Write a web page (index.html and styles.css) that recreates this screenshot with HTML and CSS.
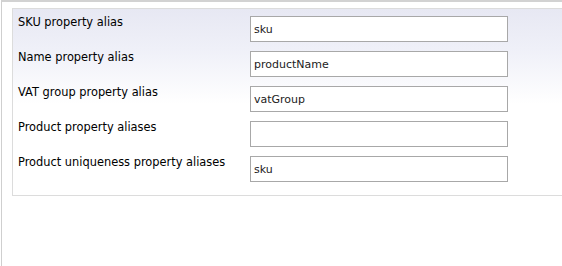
FILE: index.html
```html
<!DOCTYPE html>
<html lang="en">
<head>
    <meta charset="UTF-8">
    <title>Product settings</title>
    <link rel="stylesheet" href="styles.css">
</head>
<body>
    <div class="panel">
        <div class="propertyPane">
            <div class="propertyItem">
                <div class="propertyItemheader">SKU property alias</div>
                <input class="guiInputText" type="text" value="sku">
            </div>
            <div class="propertyItem">
                <div class="propertyItemheader">Name property alias</div>
                <input class="guiInputText" type="text" value="productName">
            </div>
            <div class="propertyItem">
                <div class="propertyItemheader">VAT group property alias</div>
                <input class="guiInputText" type="text" value="vatGroup">
            </div>
            <div class="propertyItem">
                <div class="propertyItemheader">Product property aliases</div>
                <input class="guiInputText" type="text" value="">
            </div>
            <div class="propertyItem">
                <div class="propertyItemheader">Product uniqueness property aliases</div>
                <input class="guiInputText" type="text" value="sku">
            </div>
        </div>
    </div>
</body>
</html>
```

FILE: styles.css
```css
body {
    margin: 0;
    overflow: hidden;
    background: #fff;
    font-family: "DejaVu Sans", sans-serif;
}

.panel {
    height: 264px;
    margin-left: 1px;
    padding: 6px 0 0 10px;
    border-top: 2px solid #d2d2d2;
    border-left: 1px solid #cfcfcf;
}

.propertyPane {
    padding: 7px 0 13px 5px;
    border: 1px solid #dcdcdc;
    border-right: none;
    background: linear-gradient(#e7e8f3, #eff0f8 40px, #fff 95px);
}

.propertyItem {
    display: flex;
    align-items: flex-start;
    height: 35px;
}

.propertyItem:last-child {
    height: 26px;
}

.propertyItemheader {
    width: 232px;
    margin-top: -1px;
    font-size: 11.4px;
    line-height: 14px;
    color: #000;
}

.guiInputText {
    box-sizing: border-box;
    width: 258px;
    height: 26px;
    margin: 0;
    padding: 0 3px;
    border: 1px solid #a8a8a8;
    background: #fff;
    font-family: "DejaVu Sans", sans-serif;
    font-size: 11px;
    color: #222;
}
```
